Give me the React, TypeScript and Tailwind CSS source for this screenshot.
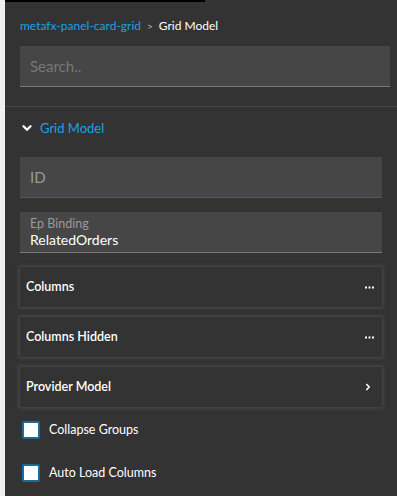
import { ChevronDown, ChevronRight } from "lucide-react";

const cards = [
  { label: "Columns", icon: "dots" },
  { label: "Columns Hidden", icon: "dots" },
  { label: "Provider Model", icon: "chevron" },
];

const checks = ["Collapse Groups", "Auto Load Columns"];

function Dots() {
  return (
    <svg width="9" height="3" viewBox="0 0 9 3" className="text-white">
      <rect x="0" y="0.5" width="2" height="2" fill="currentColor" />
      <rect x="3.5" y="0.5" width="2" height="2" fill="currentColor" />
      <rect x="7" y="0.5" width="2" height="2" fill="currentColor" />
    </svg>
  );
}

export default function App() {
  return (
    <div className="flex h-[496px] w-[397px] bg-[#f0f0f0] font-['Lato',sans-serif]">
      <div className="ml-[5px] flex flex-1 flex-col bg-[#333333]">
        <div className="h-[2px] w-[200px] bg-black" />

        {/* Breadcrumb */}
        <div className="flex items-center gap-[6px] px-[15px] pt-[16px] text-[12px] leading-[16px]">
          <span className="text-[#1ba1e2]">metafx-panel-card-grid</span>
          <span className="text-[10px] text-[#bbbbbb]">&gt;</span>
          <span className="text-white">Grid Model</span>
        </div>

        {/* Search */}
        <div className="mt-[12px] mr-[7px] ml-[15px] h-[41px] border-b border-[#7a7a7a] bg-[#464646] px-[10px]">
          <input
            placeholder="Search.."
            className="h-full w-full bg-transparent text-[15px] text-white placeholder:text-[#777777] outline-none"
          />
        </div>

        <div className="mt-[19px] h-px bg-[#474747]" />

        {/* Section header */}
        <div className="flex items-center gap-[6px] px-[15px] pt-[13px] text-[13px] leading-[16px] text-[#1ba1e2]">
          <ChevronDown size={14} strokeWidth={4} className="text-white" />
          <span>Grid Model</span>
        </div>

        <div className="mr-[15px] ml-[15px] flex flex-col">
          {/* ID field */}
          <div className="mt-[21px] flex h-[41px] items-center border-b border-[#1a6a9a] bg-[#464646] px-[10px]">
            <span className="text-[15px] text-[#9a9a9a]">ID</span>
          </div>

          {/* Ep Binding */}
          <div className="mt-[14px] flex h-[41px] flex-col justify-center border-b border-[#7a7a7a] bg-[#464646] px-[10px]">
            <span className="text-[12.5px] leading-[14px] text-[#9a9a9a]">Ep Binding</span>
            <span className="text-[14px] leading-[17px] text-white">RelatedOrders</span>
          </div>

          {/* Cards */}
          <div className="mt-[14px] flex flex-col gap-[10px]">
            {cards.map((c) => (
              <div
                key={c.label}
                className="flex h-[40px] items-center justify-between bg-[#333333] pr-[8px] pl-[6px] shadow-[0_0_4px_1px_rgba(95,95,95,0.6)]"
              >
                <span className="text-[12.5px] font-semibold text-white">{c.label}</span>
                {c.icon === "dots" ? (
                  <Dots />
                ) : (
                  <ChevronRight size={10} strokeWidth={4} className="mr-[1px] text-white" />
                )}
              </div>
            ))}
          </div>

          {/* Checkboxes */}
          <div className="mt-[14px] flex flex-col gap-[24px]">
            {checks.map((label) => (
              <label key={label} className="flex items-center gap-[9px] pl-[2px]">
                <span className="h-[18px] w-[18px] rounded-[2px] border-2 border-[#1a6a9a] bg-white" />
                <span className="text-[12.5px] text-white">{label}</span>
              </label>
            ))}
          </div>
        </div>
      </div>
    </div>
  );
}
